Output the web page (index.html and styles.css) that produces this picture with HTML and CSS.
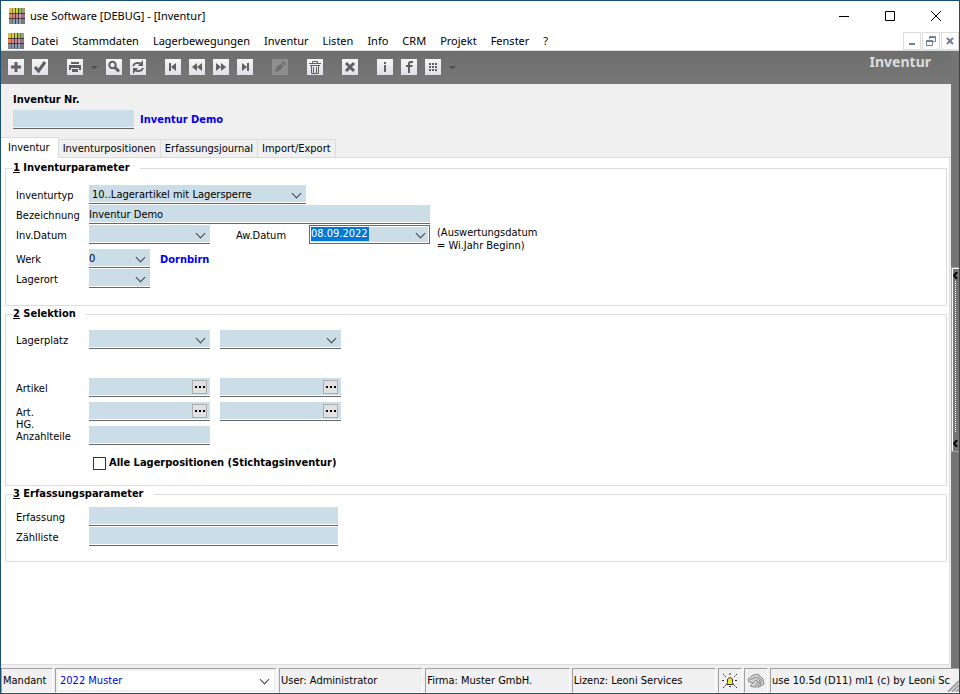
FILE: index.html
```
<!DOCTYPE html>
<html lang="de">
<head>
  <meta charset="UTF-8" />
  <meta name="viewport" content="width=device-width, initial-scale=1.0" />
  <title>use Software [DEBUG] - [Inventur]</title>
  <link rel="stylesheet" href="styles.css">
</head>
<body>
  <svg class="defs" width="0" height="0" aria-hidden="true">
    <symbol id="logo" viewBox="0 0 16 16">
      <path fill="#e0b84e" d="M0 0h4v5H0z"/>
      <path fill="#ced62c" d="M4 0h5v5H4z"/>
      <path fill="#8cc060" d="M9 0h4v5H9z"/>
      <path fill="#a09a78" d="M13 0h3v5h-3z"/>
      <path fill="#d98c50" d="M0 5h4v6H0z"/>
      <path fill="#cf8298" d="M4 5h5v6H4z"/>
      <path fill="#c898b8" d="M9 5h4v6H9z"/>
      <path fill="#987480" d="M13 5h3v6h-3z"/>
      <path fill="#868c98" d="M0 11h4v5H0z"/>
      <path fill="#84a2b6" d="M4 11h5v5H4z"/>
      <path fill="#98a8b6" d="M9 11h4v5H9z"/>
      <path fill="#7a7480" d="M13 11h3v5h-3z"/>
      <path stroke="#3b2a2c" stroke-opacity=".8" fill="none" d="M0 5.500h16M0 10.500h16M6.500 0v16M9.500 0v16"/>
      <path stroke="#3b2a2c" stroke-opacity=".4" fill="none" d="M3.500 0v16M12.500 0v16"/>
    </symbol>
  </svg>

  <header class="titlebar">
    <svg class="logo"><use href="#logo"/></svg>
    <span class="title">use Software [DEBUG] - [Inventur]</span>
    <div class="window-buttons">
      <button aria-label="Minimieren"><svg width="10" height="10"><path d="M0 5.500h10"/></svg></button>
      <button aria-label="Maximieren"><svg width="10" height="10"><path d="M.5.5h9v9h-9z"/></svg></button>
      <button aria-label="Schließen"><svg width="10" height="10"><path d="M0 0l10 10M10 0L0 10"/></svg></button>
    </div>
  </header>

  <nav class="menubar">
    <svg class="logo"><use href="#logo"/></svg>
    <a href="#">Datei</a>
    <a href="#">Stammdaten</a>
    <a href="#">Lagerbewegungen</a>
    <a href="#">Inventur</a>
    <a href="#">Listen</a>
    <a href="#">Info</a>
    <a href="#">CRM</a>
    <a href="#">Projekt</a>
    <a href="#">Fenster</a>
    <a href="#">?</a>
    <div class="mdi-buttons">
      <button aria-label="Fenster minimieren"><svg width="10" height="10"><path d="M2 8h6"/></svg></button>
      <button aria-label="Fenster wiederherstellen"><svg width="10" height="10"><path class="thin" d="M3.500 3V.5h6v5H7M3 1.500h7M.5 4.500h6v5h-6zM0 5.500h7"/></svg></button>
      <button aria-label="Fenster schließen"><svg width="10" height="10"><path d="M2 2l6 6M8 2L2 8"/></svg></button>
    </div>
  </nav>

  <div class="workspace">
    <div class="main">
      <div class="toolbar">
        <div class="tools">
          <button aria-label="Neu"><svg viewBox="0 0 16 16"><path class="line" d="M8 3v10M3 8h10"/></svg></button>
          <button aria-label="Speichern"><svg viewBox="0 0 16 16"><path class="line" d="M3 8l3.500 4L13 3"/></svg></button>
        </div>
        <div class="tools">
          <button aria-label="Drucken"><svg viewBox="0 0 16 16"><path d="M4 3h8v2H4zM2 6h12v5h-2V9H4v2H2zM5 10h6v3H5z"/></svg></button>
          <span class="caret"></span>
          <button aria-label="Suchen"><svg viewBox="0 0 16 16"><circle class="mid" cx="6.500" cy="6" r="3.200"/><path class="line" d="M9 8.500l4 4"/></svg></button>
          <button aria-label="Aktualisieren"><svg viewBox="0 0 16 16"><path class="mid" d="M3 7c1-3 5-4 8-2M13 9c-1 3-5 4-8 2"/><path d="M13 1v6H8zM3 15V9h5z"/></svg></button>
        </div>
        <div class="tools">
          <button aria-label="Erster"><svg viewBox="0 0 16 16"><path d="M4 4h2v8H4zM11 4v8L6 8z"/></svg></button>
          <button aria-label="Zurück"><svg viewBox="0 0 16 16"><path d="M8 4v8L3 8zM13 4v8L8 8z"/></svg></button>
          <button aria-label="Weiter"><svg viewBox="0 0 16 16"><path d="M3 4v8l5-4zM8 4v8l5-4z"/></svg></button>
          <button aria-label="Letzter"><svg viewBox="0 0 16 16"><path d="M5 4v8l5-4zM10 4h2v8h-2z"/></svg></button>
        </div>
        <div class="tools">
          <button aria-label="Bearbeiten" disabled><svg viewBox="0 0 16 16"><path d="M3 13l1-4 4.500-4.500 3 3L7 12zM9.500 3.500L11 2l3 3-1.500 1.500z"/></svg></button>
        </div>
        <div class="tools">
          <button aria-label="Löschen"><svg viewBox="0 0 16 16"><path class="thin" d="M2 4.500h12M5.500 4V2.500h5V4M4.500 7v7.500h7V7M3 6.500h10M6.500 8v6M9.500 8v6"/></svg></button>
        </div>
        <div class="tools">
          <button aria-label="Abbrechen"><svg viewBox="0 0 16 16"><path class="line" d="M4 4l8 8M12 4l-8 8"/></svg></button>
        </div>
        <div class="tools">
          <button aria-label="Info"><svg viewBox="0 0 16 16"><path d="M7 3h2v2H7zM7 6h2v7H7z"/></svg></button>
          <button aria-label="Facebook"><svg viewBox="0 0 16 16"><path d="M7 14V8H5V6h2V4.500C7 3 8 2 9.500 2H12v2h-1.500C9.500 4 9 4.300 9 5v1h2.500v2H9v6z"/></svg></button>
          <button aria-label="Raster"><svg viewBox="0 0 16 16"><path d="M4 4h2v2H4zM7 4h2v2H7zM10 4h2v2h-2zM4 7h2v2H4zM7 7h2v2H7zM10 7h2v2h-2zM4 10h2v2H4zM7 10h2v2H7zM10 10h2v2h-2z"/></svg></button>
          <span class="caret"></span>
        </div>
        <h1>Inventur</h1>
      </div>

      <div class="record">
        <label for="nr">Inventur Nr.</label>
        <div class="record-line">
          <input class="field medium" id="nr" type="text">
          <strong class="info">Inventur Demo</strong>
        </div>
      </div>

      <div class="tabs" role="tablist">
        <button class="active" role="tab" aria-selected="true">Inventur</button>
        <button role="tab">Inventurpositionen</button>
        <button role="tab">Erfassungsjournal</button>
        <button role="tab">Import/Export</button>
      </div>

      <form class="panel">
        <fieldset>
          <legend><u>1</u> Inventurparameter</legend>
          <div class="row">
            <label for="typ">Inventurtyp</label>
            <span class="combo large"><select class="field" id="typ"><option>10..Lagerartikel mit Lagersperre</option></select></span>
          </div>
          <div class="row">
            <label for="bez">Bezeichnung</label>
            <input class="field wide" id="bez" type="text" value="Inventur Demo">
          </div>
          <div class="row tall">
            <label for="inv">Inv.Datum</label>
            <span class="combo medium"><select class="field" id="inv"><option></option></select></span>
            <label class="second" for="aw">Aw.Datum</label>
            <span class="combo medium focused"><input id="aw" type="text" value="08.09.2022"></span>
            <span class="note">(Auswertungsdatum<br>= Wi.Jahr Beginn)</span>
          </div>
          <div class="row">
            <label for="werk">Werk</label>
            <span class="combo small"><select class="field flush" id="werk"><option>0</option></select></span>
            <strong class="info">Dornbirn</strong>
          </div>
          <div class="row">
            <label for="ort">Lagerort</label>
            <span class="combo small"><select class="field" id="ort"><option></option></select></span>
          </div>
        </fieldset>

        <fieldset class="selection">
          <legend><u>2</u> Selektion</legend>
          <div class="row spaced">
            <label for="platz">Lagerplatz</label>
            <span class="combo medium"><select class="field" id="platz"><option></option></select></span>
            <span class="combo medium"><select class="field" aria-label="Lagerplatz bis"><option></option></select></span>
          </div>
          <div class="row tall">
            <label for="artikel">Artikel</label>
            <span class="lookup medium"><input class="field" id="artikel" type="text"><button type="button" aria-label="Artikel suchen"><i></i></button></span>
            <span class="lookup medium"><input class="field" aria-label="Artikel bis" type="text"><button type="button" aria-label="Artikel suchen"><i></i></button></span>
          </div>
          <div class="row tall">
            <label for="hg">Art.<br>HG.</label>
            <span class="lookup medium"><input class="field" id="hg" type="text"><button type="button" aria-label="Hauptgruppe suchen"><i></i></button></span>
            <span class="lookup medium"><input class="field" aria-label="Art. HG. bis" type="text"><button type="button" aria-label="Hauptgruppe suchen"><i></i></button></span>
          </div>
          <div class="row">
            <label for="teile">Anzahlteile</label>
            <input class="field medium" id="teile" type="text">
          </div>
          <div class="check">
            <input id="alle" type="checkbox">
            <label for="alle">Alle Lagerpositionen (Stichtagsinventur)</label>
          </div>
        </fieldset>

        <fieldset class="capture">
          <legend><u>3</u> Erfassungsparameter</legend>
          <div class="row">
            <label for="erf">Erfassung</label>
            <input class="field long" id="erf" type="text">
          </div>
          <div class="row">
            <label for="liste">Zählliste</label>
            <input class="field long" id="liste" type="text">
          </div>
        </fieldset>
      </form>
    </div>

    <aside class="splitter">
      <button aria-label="Seitenleiste öffnen">
        <svg width="5" height="7"><path d="M4 0L1 3.500 4 7"/></svg>
        <span class="grip"></span>
        <svg width="5" height="7"><path d="M4 0L1 3.500 4 7"/></svg>
      </button>
    </aside>
  </div>

  <footer class="statusbar">
    <label class="cell" for="mandant">Mandant</label>
    <div class="cell client"><span class="combo"><select id="mandant"><option>2022 Muster</option></select></span></div>
    <div class="cell">User: Administrator</div>
    <div class="cell">Firma: Muster GmbH.</div>
    <div class="cell">Lizenz: Leoni Services</div>
    <div class="cell icon">
      <svg width="16" height="16"><path fill="#f2e83a" stroke="#333" d="M4.500 11.500l1-2V7c0-3 5-3 5 0v2.500l1 2z"/><path fill="none" stroke="#333" stroke-dasharray="2 1" d="M8 0v3M1 1l3 3M15 1l-3 3M0 7.500h3M13 7.500h3M1 15l3-3M15 15l-3-3M7 13.500h2"/></svg>
    </div>
    <div class="cell icon">
      <svg width="18" height="16"><path fill="#d2d2d2" stroke="#8c8c8c" d="M1 6l5-4 5-1 5 5 1 5-5 3H7l-4-1 3-3-4-1z"/><path fill="none" stroke="#8c8c8c" d="M3 7l6-3 4 4-2 5M6 10l3-3 2 2-3 4M11 3l4 5M14 8l-1 5"/></svg>
    </div>
    <div class="cell version"><span>use 10.5d (D11) ml1 (c) by Leoni Sc</span>
      <svg width="12" height="12"><path fill="none" stroke="#a0a0a0" stroke-width="2" d="M1 12L12 1M5 12l7-7M9 12l3-3"/></svg>
    </div>
  </footer>
</body>
</html>
```
FILE: styles.css
```
:root {
  --face: #f0f0f0;
  --bar: #747474;
  --field: #cbdde6;
  --line: #666;
  --border: #dcdcdc;
  --frame: #1a4f72;
}

* {
  box-sizing: border-box;
}

body {
  margin: 0;
  min-height: 100vh;
  display: flex;
  flex-direction: column;
  border: 1px solid var(--frame);
  background: white;
  color: #000;
  font-family: "DejaVu Sans Condensed", "DejaVu Sans", sans-serif;
  font-stretch: condensed;
  font-size: 11px;
  line-height: 14px;
}

button, input, select {
  margin: 0;
  padding: 0;
  border: 0;
  border-radius: 0;
  font: inherit;
  color: inherit;
  background: none;
  appearance: none;
}

.defs {
  position: absolute;
}

.logo {
  width: 16px;
  height: 16px;
}

/* title bar and menu */
.titlebar, .menubar {
  display: flex;
  align-items: center;
  font-family: "Noto Sans", sans-serif;
  font-stretch: normal;
  font-size: 11px;
  line-height: 16px;
}

.titlebar {
  height: 29px;
  padding-left: 8px;
  gap: 5px;
}

.window-buttons {
  display: flex;
  margin-left: auto;
}

.window-buttons button {
  width: 46px;
  height: 28px;
}

.window-buttons svg {
  display: block;
  margin: auto;
  fill: none;
  stroke: #000;
}

.menubar {
  height: 21px;
  padding: 1px 0 0 7px;
  gap: 14px;
  border-bottom: 1px solid var(--border);
}

.menubar .logo {
  margin-right: -7px;
}

.menubar a {
  color: inherit;
  text-decoration: none;
}

.mdi-buttons {
  display: flex;
  gap: 1px;
  margin-left: auto;
}

.mdi-buttons button {
  width: 18px;
  height: 18px;
  border: 1px solid var(--border);
}

.mdi-buttons svg {
  display: block;
  margin: auto;
  fill: none;
  stroke: #70808f;
  stroke-width: 2;
}

.mdi-buttons .thin {
  stroke-width: 1;
}

/* work area */
.workspace {
  flex: 1;
  display: flex;
}

.main {
  flex: 1;
  display: flex;
  flex-direction: column;
  background: var(--face);
}

.toolbar {
  display: flex;
  align-items: center;
  gap: 19px;
  height: 33px;
  padding: 0 20px 1px 7px;
  background: linear-gradient(#6e6e6e, #777);
}

.tools {
  display: flex;
  align-items: center;
  gap: 8px;
}

.tools button {
  width: 16px;
  height: 16px;
  background: linear-gradient(#f6f6f8, #dfe0e6);
}

.tools button:disabled {
  background: #8e8e8e;
}

.tools svg {
  display: block;
  width: 16px;
  height: 16px;
  fill: #606060;
}

.tools button:disabled svg {
  fill: #6e6e6e;
}

.tools .line, .tools .mid, .tools .thin {
  fill: none;
  stroke: #606060;
  stroke-width: 3;
}

.tools .mid {
  stroke-width: 2;
}

.tools .thin {
  stroke-width: 1;
}

.caret {
  width: 7px;
  border: 3px solid transparent;
  border-top-color: #505050;
  border-bottom: 0;
}

h1 {
  margin: 0 0 11px auto;
  font-family: "Noto Sans", sans-serif;
  font-stretch: normal;
  font-size: 14px;
  line-height: 16px;
  color: #dcdcdc;
}

.record {
  height: 53px;
  padding: 9px 12px;
  font-weight: bold;
}

.record-line {
  display: flex;
  align-items: center;
  gap: 6px;
  margin-top: 3px;
}

.info {
  color: #0000f0;
}

.tabs {
  display: flex;
  align-items: flex-end;
  height: 21px;
  border-bottom: 1px solid var(--border);
}

.tabs button {
  height: 18px;
  padding: 1px 4px 0;
  border: 1px solid var(--border);
  border-left: 0;
  border-bottom: 0;
}

.tabs .active {
  height: 21px;
  padding: 0 8px 1px 7px;
  margin-bottom: -1px;
  background: white;
}

.panel {
  flex: 1;
  padding: 3px 2px 3px 4px;
  background: white;
  border-right: 1px solid var(--border);
  border-bottom: 1px solid var(--border);
  margin-right: 1px;
  margin-bottom: 3px;
}

fieldset {
  margin: 0 0 1px;
  padding: 10px 10px 16px;
  border: 1px solid var(--border);
}

.selection {
  padding-top: 9px;
  padding-bottom: 15px;
}

.capture {
  padding-top: 6px;
  padding-bottom: 14px;
}

legend {
  margin-left: -3px;
  padding: 0 10px 0 0;
  font-weight: bold;
}

.row {
  display: flex;
  align-items: flex-start;
  gap: 10px;
  height: 20px;
}

.row.tall {
  height: 24px;
}

.row.spaced {
  height: 48px;
}

.row label {
  width: 73px;
  padding-top: 5px;
  margin-right: -10px;
  line-height: 12px;
}

.row label.second {
  width: 89px;
  padding-left: 16px;
}

.row .info {
  padding-top: 4px;
}

.note {
  margin-left: -3px;
  padding-top: 1px;
  line-height: 13px;
}

/* fields: fill, a white hairline, then the rule */
.field {
  height: 19px;
  padding-top: 1px;
  border-bottom: 1px solid var(--line);
  background: linear-gradient(var(--field), var(--field)) no-repeat 0 0 / 100% 17px;
}

.small { width: 61px; }
.medium { width: 121px; }
.large { width: 217px; }
.long { width: 249px; }
.wide { width: 341px; }

.combo, .lookup {
  position: relative;
  display: flex;
}

.combo .field, .lookup .field {
  width: 100%;
}

.combo select {
  text-indent: 3px;
}

.combo .flush {
  text-indent: 0;
}

.combo::after {
  content: "";
  position: absolute;
  top: 5px;
  right: 6px;
  width: 6px;
  height: 6px;
  border: solid #444;
  border-width: 0 1px 1px 0;
  transform: rotate(45deg);
}

.focused {
  height: 19px;
  padding: 1px;
  border: 1px solid var(--line);
  background: var(--field) content-box;
}

.focused input {
  width: 58px;
  height: 14px;
  background: #0078d7;
  color: white;
}

.focused::after {
  top: 4px;
  right: 5px;
}

.lookup button {
  position: absolute;
  top: 2px;
  right: 3px;
  width: 15px;
  height: 14px;
  border: 1px solid #adadad;
  background: #e1e1e1;
}

.lookup i {
  display: block;
  width: 10px;
  height: 2px;
  margin: auto;
  background: repeating-linear-gradient(90deg, #000 0 2px, transparent 2px 4px);
}

.check {
  display: flex;
  align-items: center;
  gap: 3px;
  padding: 10px 0 0 77px;
  font-weight: bold;
}

.check input {
  width: 13px;
  height: 13px;
  border: 1px solid #333;
}

.check input:checked {
  background: #333;
}

/* right splitter */
.splitter {
  display: flex;
  align-items: center;
  width: 8px;
  background: var(--bar);
}

.splitter button {
  display: flex;
  flex-direction: column;
  align-items: center;
  justify-content: space-between;
  width: 8px;
  height: 185px;
  padding: 4px 0;
  border: 1px solid #a0a0a0;
  border-right: 0;
  box-shadow: inset 1px 1px white;
}

.splitter svg {
  fill: none;
  stroke: #000;
  stroke-width: 2;
}

.grip {
  flex: 1;
  width: 1px;
  margin: 2px 0 8px;
  background: repeating-linear-gradient(#fff 0 1px, #4a86b8 1px 2px);
}

/* status bar */
.statusbar {
  display: grid;
  grid-template-columns: 52px 222px 1fr 1fr 1fr 24px 24px 189px;
  gap: 2px;
  height: 25px;
  background: var(--face);
}

.cell {
  display: flex;
  align-items: center;
  min-width: 0;
  padding: 1px 0 0 1px;
  border: 1px solid white;
  border-top-color: #a0a0a0;
  border-left-color: #a0a0a0;
  white-space: nowrap;
}

.cell.client {
  padding: 2px;
}

.client .combo {
  flex: 1;
  height: 100%;
  background: white;
}

.client select {
  width: 100%;
  padding-top: 1px;
  text-indent: 2px;
  color: #0000f0;
}

.client .combo::after {
  top: 5px;
}

.cell.icon {
  justify-content: center;
  padding: 0;
}

.cell.version {
  position: relative;
  border-right: 0;
}

.version span {
  flex: 1;
  overflow: hidden;
}

.version svg {
  position: absolute;
  right: 0;
  bottom: 0;
}
```
